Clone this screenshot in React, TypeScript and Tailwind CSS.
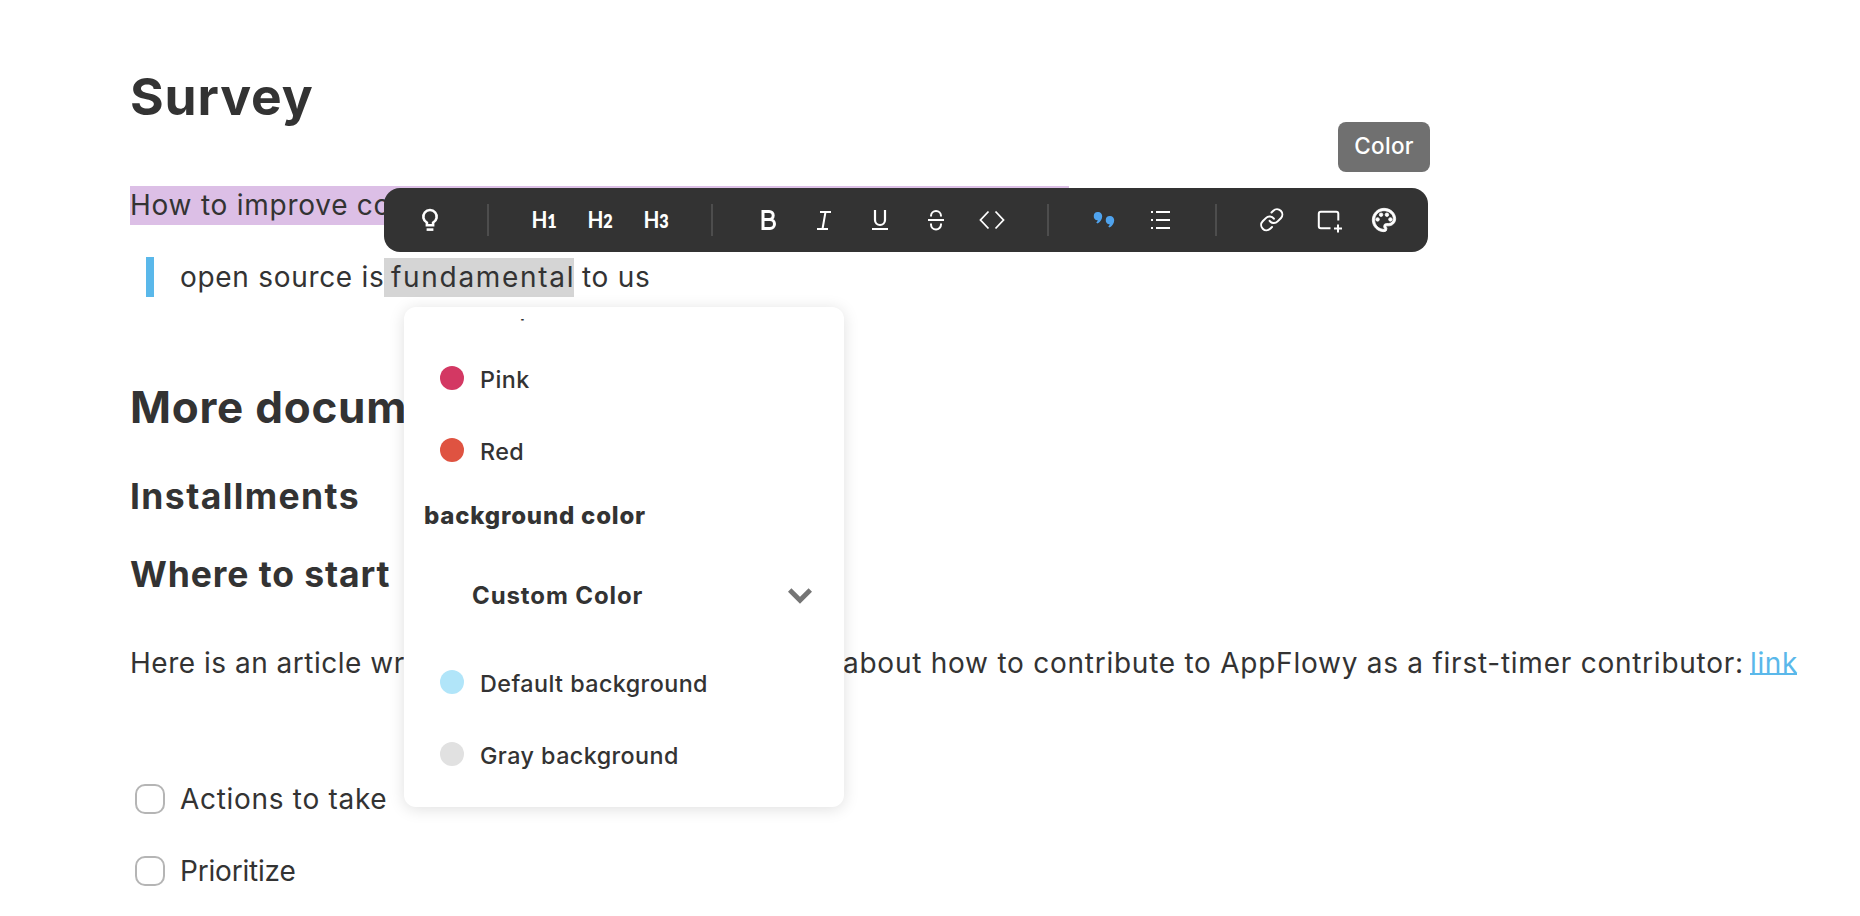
import React from 'react'
import { Link } from 'lucide-react'
import { MdOutlinePalette } from 'react-icons/md'

function Glyph({ children, width = 2 }: { children: React.ReactNode; width?: number }) {
  return (
    <svg width="32" height="32" viewBox="0 0 32 32" fill="none" stroke="currentColor" strokeWidth={width}>
      {children}
    </svg>
  )
}

function Heading({ level }: { level: number }) {
  return (
    <span className="flex scale-x-90 items-baseline font-[Lato] text-[23px] leading-8 font-bold">
      H<span className="text-[18px] font-extrabold">{level}</span>
    </span>
  )
}

function Cell({ children }: { children?: React.ReactNode }) {
  return <div className="flex h-full w-14 shrink-0 items-center justify-center">{children}</div>
}

function Divider() {
  return (
    <Cell>
      <span className="h-8 w-0.5 bg-[#4d4d4d]" />
    </Cell>
  )
}

function Toolbar() {
  return (
    <div className="absolute top-[188px] left-[384px] flex h-16 w-[1044px] items-center rounded-[16px] bg-[#333333] pl-5 text-white">
      <Cell>
        <Glyph width={2.6}>
          <path d="M10.9 21.3V18.7A6.7 6.7 0 1 1 17.1 18.7V21.3Z" />
          <path d="M10.6 25.6H17.4" />
        </Glyph>
      </Cell>
      <Divider />
      <Cell><Heading level={1} /></Cell>
      <Cell><Heading level={2} /></Cell>
      <Cell><Heading level={3} /></Cell>
      <Divider />
      <Cell>
        <Glyph width={3}>
          <path d="M11 7.5H17.2a4 4 0 0 1 0 8H11zM11 15.5H18a4.5 4.5 0 0 1 0 9H11z" />
        </Glyph>
      </Cell>
      <Cell>
        <Glyph>
          <path d="M12 8H23M9 25H20M17.5 8L14.5 25" />
        </Glyph>
      </Cell>
      <Cell>
        <Glyph width={2.2}>
          <path d="M11 6V16a5 5 0 0 0 10 0V6M8 25H24" />
        </Glyph>
      </Cell>
      <Cell>
        <Glyph>
          <path d="M8 16H24M11 12.5V12a5 5 0 0 1 10 0V12.5M11 19.5V20.5a5 5 0 0 0 10 0V19.5" />
        </Glyph>
      </Cell>
      <Cell>
        <Glyph width={1.8}>
          <path d="M12.5 7.5L4.5 16L12.5 24.5M19.5 7.5L27.5 16L19.5 24.5" />
        </Glyph>
      </Cell>
      <Divider />
      <Cell>
        <svg width="32" height="32" viewBox="0 0 32 32" fill="#4fa3ee">
          <path d="M10 8a4 4 0 0 1 4.2 4.2c0 3-2 5.8-4.6 7.2l-1.4-.8c.9-.8 1.4-1.6 1.5-2.4A4.1 4.1 0 0 1 10 8z" />
          <path d="M22 12a4 4 0 0 1 4.2 4.2c0 3-2 5.8-4.6 7.2l-1.4-.8c.9-.8 1.4-1.6 1.5-2.4A4.1 4.1 0 0 1 22 12z" />
        </svg>
      </Cell>
      <Cell>
        <Glyph>
          <path d="M7 8h2M12 8h14M7 16h2M12 16h14M7 24h2M12 24h14" />
        </Glyph>
      </Cell>
      <Divider />
      <Cell><Link size={25.5} strokeWidth={1.9} /></Cell>
      <Cell>
        <Glyph>
          <path d="M18.5 24.2H8.8a2 2 0 0 1-2-2V9.8a2 2 0 0 1 2-2h15.5a2 2 0 0 1 2 2V16.5M22 24.5h8M26 20.5v8" />
        </Glyph>
      </Cell>
      <Cell><MdOutlinePalette className="size-[28px] stroke-white stroke-[0.7px] [&>path[fill=none]]:stroke-none" /></Cell>
    </div>
  )
}

function ColorRow({ color, label }: { color: string; label: string }) {
  return (
    <div className="flex h-[72px] shrink-0 items-center pl-9">
      <span className="mb-0.5 size-6 rounded-full" style={{ backgroundColor: color }} />
      <span className="mt-0.5 ml-4 text-[23.3px] leading-8 font-medium tracking-[0.45px]">{label}</span>
    </div>
  )
}

function ColorMenu() {
  return (
    <div className="absolute top-[307px] left-[404px] h-[500px] w-[440px] rounded-[12px] bg-white py-3 shadow-[0_2px_16px_rgba(0,0,0,0.13)]">
      <div className="flex h-full flex-col overflow-hidden">
        <div className="-mt-12 flex flex-col">
          <ColorRow color="#9b51e0" label="Purple" />
          <ColorRow color="#d33863" label="Pink" />
          <ColorRow color="#df5341" label="Red" />
          <div className="flex h-14 items-center pt-0.5 pl-5 text-[24px] leading-8 font-extrabold tracking-[0.8px]">
            background color
          </div>
          <div className="flex h-[104px] items-center justify-between pt-0.5 pr-8 pl-[68px]">
            <span className="text-[24px] leading-8 font-bold tracking-[0.9px]">Custom Color</span>
            <svg width="24" height="16" viewBox="0 0 24 16" fill="none" stroke="#757575" strokeWidth="4.8">
              <path d="M1.7 2L12 12.3L22.3 2" />
            </svg>
          </div>
          <ColorRow color="#b1e5f9" label="Default background" />
          <ColorRow color="#e1e1e1" label="Gray background" />
        </div>
      </div>
    </div>
  )
}

function Todo({ label, tracking }: { label: string; tracking: string }) {
  return (
    <div className="flex h-10 items-center pl-[5px]">
      <span className="size-[30px] rounded-[10px] border-2 border-[#b5b5b5]" />
      <span className={`ml-[15px] ${tracking}`}>{label}</span>
    </div>
  )
}

export default function App() {
  return (
    <div className="relative h-[916px] w-[1860px] overflow-hidden bg-white font-[Inter,sans-serif] text-[#333333]">
      <main className="flex flex-col pt-14 pl-[130px] text-[28px] leading-10 whitespace-nowrap">
        <h1 className="h-20 text-[51.5px] leading-[80px] font-bold tracking-[0.9px]">Survey</h1>
        <p className="mt-[50px] h-[39px] w-[939px] bg-[#dcbfe6] leading-[38px] tracking-[0.75px]">
          How to improve co
        </p>
        <div className="mt-8 flex h-10 pl-4">
          <span className="w-2 bg-[#5ab8ea]" />
          <span className="w-[230px] pl-[26px] tracking-[0.7px]">open source is</span>
          <span className="mt-px h-[39px] w-[190px] bg-[#d5d5d5] pl-[7px] leading-[38px] tracking-[1.7px]">fundamental</span>
          <span className="pl-2 tracking-[0.7px]">to us</span>
        </div>
        <h2 className="mt-20 h-[60px] text-[44px] leading-[60px] font-bold tracking-[0.75px]">More docum</h2>
        <h3 className="mt-10 h-10 text-[35.5px] font-bold tracking-[1.4px]">Installments</h3>
        <h3 className="mt-[38px] h-10 text-[35.5px] font-bold tracking-[0.9px]">Where to start</h3>
        <p className="mt-12 flex h-10">
          <span className="w-[713px] tracking-[0.51px]">Here is an article wr</span>
          <span className="w-[907px] tracking-[0.75px]">about how to contribute to AppFlowy as a first-timer contributor:</span>
          <a className="h-[32px] w-[47px] border-b-2 border-[#5ab8ea] tracking-[0.6px] text-[#5ab8ea]">link</a>
        </p>
        <div className="mt-24 flex flex-col gap-8">
          <Todo label="Actions to take" tracking="tracking-[0.7px]" />
          <Todo label="Prioritize" tracking="tracking-[-0.19px]" />
        </div>
      </main>
      <ColorMenu />
      <Toolbar />
      <div className="absolute top-[122px] left-[1338px] flex h-[50px] w-[92px] items-center justify-center rounded-[8px] bg-[#707070] pb-0.5 text-[22.5px] font-medium tracking-[0.3px] text-white">
        Color
      </div>
    </div>
  )
}
